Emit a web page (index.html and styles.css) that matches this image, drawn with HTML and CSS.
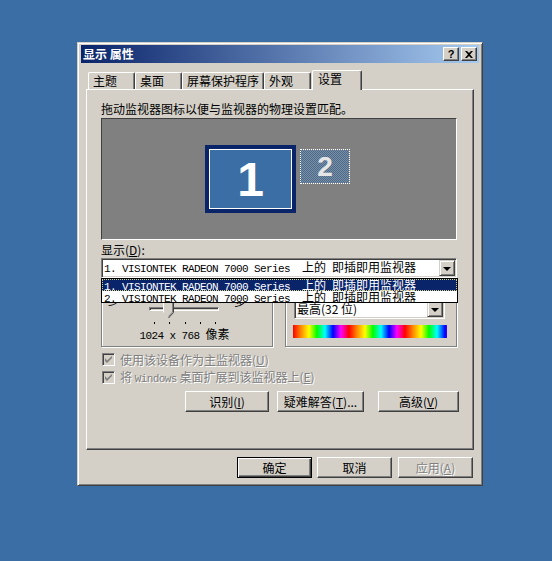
FILE: index.html
```html
<!DOCTYPE html>
<html lang="zh-CN">
<head>
    <meta charset="UTF-8">
    <title>显示 属性</title>
    <link rel="stylesheet" href="styles.css">
</head>
<body>
    <div class="window">
        <div class="titlebar">
            <span class="title">显示 属性</span>
            <span class="tb-btn help">?</span>
            <span class="tb-btn close">
                <svg width="8" height="7" viewBox="0 0 8 7"><path d="M0 0h2l2 2 2-2h2L5 3.5 8 7H6L4 5 2 7H0l3-3.5z" fill="#000"/></svg>
            </span>
        </div>

        <div class="tabs">
            <div class="tab">主题</div>
            <div class="tab">桌面</div>
            <div class="tab">屏幕保护程序</div>
            <div class="tab">外观</div>
            <div class="tab active">设置</div>
        </div>

        <div class="panel">
            <p class="hint">拖动监视器图标以便与监视器的物理设置匹配。</p>

            <div class="monitors">
                <div class="monitor primary">1</div>
                <div class="monitor secondary">2</div>
            </div>

            <div class="field-label">显示(<u>D</u>):</div>
            <div class="combo-wrap">
                <div class="combo">
                    <span class="combo-text"><span class="mono">1. VISIONTEK RADEON 7000 Series  </span>上的<span class="mono"> </span>即插即用监视器</span>
                    <span class="drop-btn"><span class="arrow"></span></span>
                </div>
                <ul class="combo-list">
                    <li class="selected"><span class="mono">1. VISIONTEK RADEON 7000 Series  </span>上的<span class="mono"> </span>即插即用监视器</li>
                    <li><span class="mono">2. VISIONTEK RADEON 7000 Series  </span>上的<span class="mono"> </span>即插即用监视器</li>
                </ul>
            </div>

            <div class="groups">
                <div class="group res">
                    <div class="slider-row">
                        <span class="less">少</span>
                        <span class="track">
                            <svg class="thumb" width="11" height="21" viewBox="0 0 11 21">
                                <path d="M0.5 0.5h10v14l-5 5.5-5-5.5z" fill="#d4d0c8"/>
                                <path d="M0.5 14.5V0.5h9" stroke="#fff" fill="none"/>
                                <path d="M10.5 0v14.5l-5 5.5" stroke="#404040" fill="none"/>
                                <path d="M9.5 1v13l-4 4.5" stroke="#808080" fill="none"/>
                            </svg>
                        </span>
                        <span class="more">多</span>
                    </div>
                    <div class="ticks"><i></i><i></i><i></i><i></i><i></i></div>
                    <div class="res-text"><span class="mono">1024 x 768 </span>像素</div>
                </div>
                <div class="group colors">
                    <div class="combo small">
                        <span class="combo-text">最高(32 位)</span>
                        <span class="drop-btn"><span class="arrow"></span></span>
                    </div>
                    <div class="color-bar"></div>
                </div>
            </div>

            <div class="check">
                <span class="box"><svg width="7" height="7" viewBox="0 0 7 7"><path d="M0 2v3l2 2 5-5V0L2 4.5z" fill="#808080"/></svg></span>
                <span>使用该设备作为主监视器(<u>U</u>)</span>
            </div>
            <div class="check second">
                <span class="box"><svg width="7" height="7" viewBox="0 0 7 7"><path d="M0 2v3l2 2 5-5V0L2 4.5z" fill="#808080"/></svg></span>
                <span>将 <span class="mono">Windows</span> 桌面扩展到该监视器上(<u>E</u>)</span>
            </div>

            <div class="actions">
                <span class="button w84">识别(<u>I</u>)</span>
                <span class="button w87">疑难解答(<u>T</u>)...</span>
                <span class="button w81">高级(<u>V</u>)</span>
            </div>
        </div>

        <div class="footer">
            <span class="button default">确定</span>
            <span class="button">取消</span>
            <span class="button disabled">应用(<u>A</u>)</span>
        </div>
    </div>
</body>
</html>
```

FILE: styles.css
```css
body {
    margin: 0;
    background: #3a6ea5;
    font-family: "Noto Sans CJK SC", sans-serif;
    font-size: 12px;
    color: #000;
}

.mono {
    font-family: "Liberation Mono", monospace;
    font-size: 11px;
    letter-spacing: -0.6px;
    white-space: pre;
}

.window {
    margin: 42px 0 0 77px;
    width: 406px;
    height: 444px;
    box-sizing: border-box;
    background: #d4d0c8;
    border: 1px solid;
    border-color: #d4d0c8 #404040 #404040 #d4d0c8;
    box-shadow: inset 1px 1px #fff, inset -1px -1px #808080;
    padding: 2px 3px;
}

.titlebar {
    height: 18px;
    background: linear-gradient(to right, #0a246a, #a6caf0);
    display: flex;
    align-items: center;
    padding: 0 2px;
    color: #fff;
}

.title {
    font-weight: bold;
    flex: 1;
    line-height: 18px;
}

.tb-btn {
    width: 16px;
    height: 14px;
    box-sizing: border-box;
    background: #d4d0c8;
    border: 1px solid;
    border-color: #fff #404040 #404040 #fff;
    box-shadow: inset -1px -1px #808080;
    display: flex;
    align-items: center;
    justify-content: center;
    color: #000;
}

.help {
    font-family: "Liberation Sans", sans-serif;
    font-weight: bold;
    font-size: 11px;
    line-height: 12px;
}

.close {
    margin-left: 2px;
}

.tabs {
    display: flex;
    align-items: flex-end;
    height: 19px;
    margin-top: 7px;
    padding-left: 7px;
}

.tab {
    height: 17px;
    box-sizing: border-box;
    min-width: 47px;
    padding: 0 4px 1px 4px;
    border-top: 1px solid #fff;
    border-left: 1px solid #fff;
    border-right: 1px solid #404040;
    box-shadow: inset -1px 0 #808080;
    border-radius: 2px 2px 0 0;
    display: flex;
    align-items: center;
    line-height: 14px;
}

.tab.active {
    position: relative;
    z-index: 1;
    height: 20px;
    width: 50px;
    margin-left: 1px;
    margin-bottom: -1px;
    padding: 0 5px 3px 5px;
    background: #d4d0c8;
}

.panel {
    margin-left: 5px;
    width: 388px;
    height: 361px;
    box-sizing: border-box;
    border: 1px solid;
    border-color: #fff #404040 #404040 #fff;
    box-shadow: inset -1px -1px #808080;
    padding: 12px 14px 0 14px;
}

.hint {
    margin: 0;
    line-height: 14px;
    height: 14px;
}

.monitors {
    position: relative;
    margin-top: 2px;
    width: 356px;
    height: 122px;
    box-sizing: border-box;
    background: #808080;
    border: 1px solid;
    border-color: #404040 #fff #fff #404040;
}

.monitor {
    position: absolute;
    box-sizing: border-box;
    display: flex;
    align-items: center;
    justify-content: center;
    font-family: "Liberation Sans", sans-serif;
    font-weight: bold;
    color: #fff;
}

.primary {
    left: 103px;
    top: 26px;
    width: 91px;
    height: 68px;
    background: #3a6ea5;
    border: 4px solid #0a246a;
    box-shadow: inset 0 0 0 1px #fff;
    font-size: 48px;
}

.secondary {
    left: 198px;
    top: 30px;
    width: 50px;
    height: 35px;
    border: 1px dotted #fff;
    background: repeating-conic-gradient(#3a6ea5 0 25%, #8a8a8a 0 50%) 0 0 / 2px 2px;
    font-size: 28px;
    color: #e6e6e6;
}

.field-label {
    margin-top: 3px;
    line-height: 14px;
    height: 14px;
}

.combo-wrap {
    position: relative;
    z-index: 2;
    margin-top: 1px;
    width: 356px;
}

.combo {
    height: 20px;
    box-sizing: border-box;
    background: #fff;
    border: 1px solid;
    border-color: #808080 #fff #fff #808080;
    box-shadow: inset 1px 1px #404040, inset -1px -1px #d4d0c8;
    display: flex;
    align-items: center;
    padding: 0 1px 0 2px;
}

.combo-text {
    flex: 1;
    line-height: 14px;
    white-space: nowrap;
}

.drop-btn {
    width: 16px;
    height: 16px;
    box-sizing: border-box;
    background: #d4d0c8;
    border: 1px solid;
    border-color: #d4d0c8 #404040 #404040 #d4d0c8;
    box-shadow: inset 1px 1px #fff, inset -1px -1px #808080;
    display: flex;
    align-items: center;
    justify-content: center;
}

.arrow {
    width: 0;
    height: 0;
    border-left: 4px solid transparent;
    border-right: 4px solid transparent;
    border-top: 4px solid #000;
    margin-top: 1px;
}

.combo-list {
    position: absolute;
    left: 0;
    top: 20px;
    width: 357px;
    height: 25px;
    box-sizing: border-box;
    margin: 0;
    padding: 0;
    list-style: none;
    background: #fff;
    border: 1px solid #000;
}

.combo-list li {
    height: 12px;
    line-height: 12px;
    padding-left: 2px;
    white-space: nowrap;
}

.combo-list li.selected {
    background: #0a246a;
    color: #fff;
    outline: 1px dotted #d8d080;
    outline-offset: -1px;
}

.groups {
    display: flex;
    gap: 12px;
    margin-top: 6px;
    width: 356px;
}

.group {
    width: 172px;
    height: 63px;
    box-sizing: border-box;
    border: 1px solid #808080;
    box-shadow: inset 1px 1px #fff, 1px 1px #fff;
}

.res {
    padding: 7px 0 0 6px;
}

.slider-row {
    display: flex;
    height: 20px;
}

.less,
.more {
    margin-top: 2px;
    line-height: 14px;
    height: 14px;
}

.track {
    position: relative;
    width: 70px;
    height: 4px;
    box-sizing: border-box;
    margin: 15px 15px 0 29px;
    border: 1px solid;
    border-color: #808080 #fff #fff #808080;
    box-shadow: inset 1px 1px #404040;
}

.thumb {
    position: absolute;
    left: 13px;
    top: -10px;
}

.ticks {
    display: flex;
    justify-content: space-between;
    width: 62px;
    height: 2px;
    margin: 10px 0 0 46px;
}

.ticks i {
    width: 1px;
    height: 2px;
    background: #000;
}

.res-text {
    margin-top: 3px;
    line-height: 14px;
    text-align: center;
    padding-right: 11px;
}

.colors {
    padding: 14px 0 0 8px;
}

.combo.small {
    width: 151px;
}

.color-bar {
    margin: 6px 0 0 -1px;
    width: 154px;
    height: 13px;
    background: repeating-linear-gradient(to right,
        #f00 0, #f80 8px, #ff0 16px, #0f0 24px, #0ff 32px, #00f 40px, #f0f 48px, #f00 56px);
}

.check {
    display: flex;
    align-items: center;
    height: 13px;
    margin-top: 6px;
    color: #808080;
    text-shadow: 1px 1px #fff;
    line-height: 14px;
    white-space: nowrap;
}

.check.second {
    margin-top: 5px;
}

.check .box {
    width: 13px;
    height: 13px;
    box-sizing: border-box;
    margin: 0 5px 0 1px;
    background: #d4d0c8;
    border: 1px solid;
    border-color: #808080 #fff #fff #808080;
    box-shadow: inset 1px 1px #404040, inset -1px -1px #d4d0c8;
    display: flex;
    align-items: center;
    justify-content: center;
}

.actions {
    display: flex;
    justify-content: flex-end;
    margin-top: 7px;
}

.button {
    width: 75px;
    height: 21px;
    box-sizing: border-box;
    background: #d4d0c8;
    border: 1px solid;
    border-color: #fff #404040 #404040 #fff;
    box-shadow: inset -1px -1px #808080;
    display: flex;
    align-items: center;
    justify-content: center;
    line-height: 14px;
    white-space: nowrap;
}

.w84 { width: 84px; }
.w87 { width: 87px; margin-left: 8px; }
.w81 { width: 81px; margin-left: 14px; }

.footer {
    display: flex;
    justify-content: flex-end;
    margin-top: 7px;
    padding-right: 6px;
}

.footer .button + .button {
    margin-left: 5px;
}

.footer .button.disabled {
    margin-left: 6px;
    color: #808080;
    text-shadow: 1px 1px #fff;
}

.button.default {
    border: 1px solid #000;
    box-shadow: inset 1px 1px #fff, inset -1px -1px #404040, inset -2px -2px #808080;
}
```
